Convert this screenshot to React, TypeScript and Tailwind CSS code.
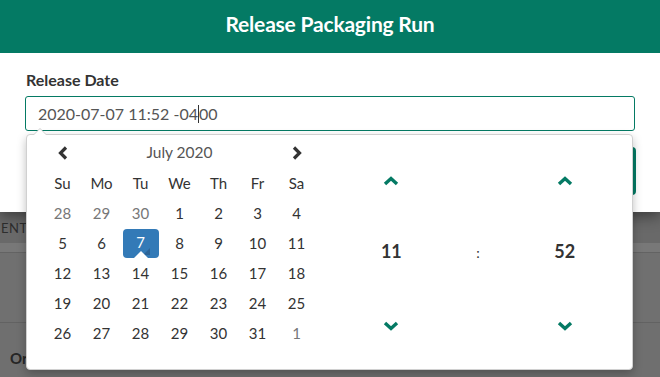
import React from "react";

const font = { fontFamily: "Lato, 'Open Sans', sans-serif" };

function ChevL() {
  return (
    <svg width="12" height="14" viewBox="0 0 12 14">
      <polyline points="9,1.5 3.5,7 9,12.5" fill="none" stroke="#333" strokeWidth="3.2" />
    </svg>
  );
}
function ChevR() {
  return (
    <svg width="12" height="14" viewBox="0 0 12 14">
      <polyline points="3,1.5 8.5,7 3,12.5" fill="none" stroke="#333" strokeWidth="3.2" />
    </svg>
  );
}
function ChevUp() {
  return (
    <svg width="16" height="10" viewBox="0 0 16 10">
      <polyline points="2,8 8,2.5 14,8" fill="none" stroke="#047a64" strokeWidth="3.4" />
    </svg>
  );
}
function ChevDown() {
  return (
    <svg width="16" height="10" viewBox="0 0 16 10">
      <polyline points="2,2 8,7.5 14,2" fill="none" stroke="#047a64" strokeWidth="3.4" />
    </svg>
  );
}

const weeks: [number, boolean][][] = [
  [[28, true], [29, true], [30, true], [1, false], [2, false], [3, false], [4, false]],
  [[5, false], [6, false], [7, false], [8, false], [9, false], [10, false], [11, false]],
  [[12, false], [13, false], [14, false], [15, false], [16, false], [17, false], [18, false]],
  [[19, false], [20, false], [21, false], [22, false], [23, false], [24, false], [25, false]],
  [[26, false], [27, false], [28, false], [29, false], [30, false], [31, false], [1, true]],
];

export default function App() {
  return (
    <div className="relative w-[660px] h-[377px] overflow-hidden bg-[#6f6f6f]" style={font}>
      {/* modal */}
      <div className="relative z-10 flex flex-col bg-white shadow-[0_4px_14px_rgba(0,0,0,0.45)]">
        <div className="h-[53px] bg-[#047a64] flex items-center justify-center">
          <span className="text-white font-bold text-[21px] tracking-[-0.2px] -mt-[5px]">Release Packaging Run</span>
        </div>
        <div className="h-[159px] pl-[25px] pr-[25px] pt-[16px] relative">
          <div className="text-[16px] font-bold text-[#333] leading-[22px] pl-[1px]">Release Date</div>
          <div className="mt-[5px] h-[35px] border border-[#047a64] rounded-[3px] flex items-center pl-[12px] text-[16px] text-[#555]">
            <span>2020-07-07 11:52 -04</span>
            <span className="inline-block w-[1px] h-[18px] bg-[#333]" />
            <span>00</span>
          </div>
          <div className="absolute right-[24px] top-[94px] w-[60px] h-[48px] rounded-[4px] bg-[#047a64]" />
        </div>
      </div>

      {/* underlying page */}
      <div className="flex flex-col text-[#262626]">
        <div className="h-[31px] flex items-center bg-[#696969]">
          <span className="text-[13px] ml-[1px] mt-[2px] text-[#2e2e2e] tracking-[0.5px]">ENTO</span>
        </div>
        <div className="h-[10px] bg-[#787878] border-b border-[#636363]" />
        <div className="h-[70px] border-b border-[#626262] bg-[#707070]" />
        <div className="h-[53px] flex items-center pl-[10px] bg-[#6f6f6f]">
          <span className="font-bold text-[15px] text-[#262626] mt-[18px]">Or</span>
        </div>
      </div>

      {/* dropdown */}
      <div className="absolute z-20 left-[26px] top-[134px] w-[607px] h-[236px] bg-white border border-[#d0d0d0] rounded-[4px] shadow-[0_4px_10px_rgba(0,0,0,0.25)] flex pt-[3px] text-[15px]">
        <div className="absolute -top-[7px] left-[6px] w-0 h-0 border-l-[7px] border-r-[7px] border-b-[7px] border-l-transparent border-r-transparent border-b-[#d0d0d0]" />
        <div className="absolute -top-[6px] left-[7px] w-0 h-0 border-l-[6px] border-r-[6px] border-b-[6px] border-l-transparent border-r-transparent border-b-white" />

        {/* calendar */}
        <div className="ml-[16px] w-[273px] flex flex-col">
          <div className="grid grid-cols-7 h-[30px] items-center">
            <div className="flex justify-center"><ChevL /></div>
            <div className="col-span-5 text-center text-[#555] text-[15.5px]">July 2020</div>
            <div className="flex justify-center"><ChevR /></div>
          </div>
          <div className="grid grid-cols-7 h-[30px] items-center text-[#333] text-[15px]">
            {["Su", "Mo", "Tu", "We", "Th", "Fr", "Sa"].map((d) => (
              <div key={d} className="text-center">{d}</div>
            ))}
          </div>
          {weeks.map((w, i) => (
            <div key={i} className="grid grid-cols-7 h-[30px] items-center">
              {w.map(([n, old], j) => {
                const sel = i === 1 && j === 2;
                if (sel) {
                  return (
                    <div key={j} className="flex justify-center">
                      <div className="relative w-[36px] h-[29px] rounded-[4px] bg-[#337ab7] text-white flex items-center justify-center overflow-hidden">
                        <span className="-mt-[1px]">7</span>
                        <div className="absolute bottom-[3px] right-[9px] w-0 h-0 border-l-[7px] border-l-transparent border-b-[7px] border-b-[#2a5f8f] opacity-80" />
                        <div className="absolute bottom-0 left-[11px] w-0 h-0 border-l-[7px] border-r-[7px] border-b-[7px] border-l-transparent border-r-transparent border-b-white" />
                      </div>
                    </div>
                  );
                }
                return (
                  <div key={j} className={`text-center ${old ? "text-[#777]" : "text-[#333]"}`}>{n}</div>
                );
              })}
            </div>
          ))}
        </div>

        {/* time */}
        <div className="ml-[32px] w-[260px] grid grid-cols-3">
          {[0, 1, 2].map((c) => (
            <div key={c} className="flex flex-col">
              <div className="h-[86px] flex items-center justify-center">{c !== 1 && <ChevUp />}</div>
              <div className="h-[54px] flex items-center justify-center">
                {c === 0 && <span className="font-bold text-[18px] text-[#333]">11</span>}
                {c === 1 && <span className="text-[14px] text-[#333] mt-[2px]">:</span>}
                {c === 2 && <span className="font-bold text-[18px] text-[#333]">52</span>}
              </div>
              <div className="h-[96px] flex items-center justify-center">{c !== 1 && <ChevDown />}</div>
            </div>
          ))}
        </div>
      </div>
    </div>
  );
}
